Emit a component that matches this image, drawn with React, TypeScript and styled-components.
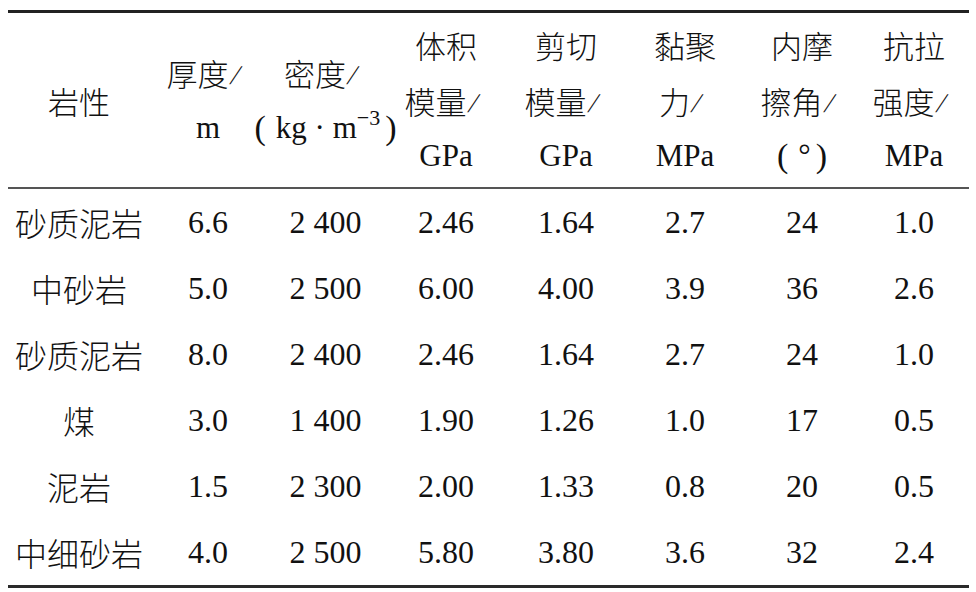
import React from "react";
import styled, { createGlobalStyle } from "styled-components";

const GlobalStyle = createGlobalStyle`
  html, body {
    margin: 0;
    padding: 0;
    background: #fff;
  }
  body {
    font-family: "Liberation Serif", "Noto Sans CJK SC", serif;
    font-weight: 300;
    color: #111;
  }
`;

const COLUMNS = "142px 116px 119px 122px 118px 120px 114px 110px";

const Page = styled.div`
  padding: 10px 0 0 8px;
`;

const Table = styled.div`
  width: 961px;
  border-top: 3px solid #222;
  border-bottom: 3px solid #2a2a2a;
`;

const HeaderRow = styled.div`
  display: grid;
  grid-template-columns: ${COLUMNS};
  height: 174px;
  border-bottom: 2px solid #555;
`;

const HeaderCell = styled.div`
  display: flex;
  flex-direction: column;
  align-items: center;
  justify-content: center;
`;

const HeaderLine = styled.div`
  height: 56px;
  display: flex;
  align-items: center;
  justify-content: center;
  font-size: 31px;
  white-space: nowrap;
`;

const Slash = styled.span`
  display: inline-block;
  width: 18px;
  font-size: 27px;
  text-align: left;
  padding-left: 3px;
  transform: translateY(3px) skewX(-18deg);
`;

const Paren = styled.span<{ $side: "l" | "r" }>`
  display: inline-block;
  font-size: 34px;
  padding: ${(p) => (p.$side === "l" ? "0 10px 0 0" : "0 0 0 5px")};
`;

const Sup = styled.span`
  display: inline-block;
  font-size: 22px;
  transform: translateY(-10px);
`;

const BodyRow = styled.div`
  display: grid;
  grid-template-columns: ${COLUMNS};
  height: 66px;
`;

const Cell = styled.div`
  display: flex;
  align-items: center;
  justify-content: center;
  font-size: 32px;
  white-space: nowrap;
`;

const Unit = ({ text }: { text: string }) => (
  <>
    {text}
    <Slash>/</Slash>
  </>
);

const rows: string[][] = [
  ["砂质泥岩", "6.6", "2 400", "2.46", "1.64", "2.7", "24", "1.0"],
  ["中砂岩", "5.0", "2 500", "6.00", "4.00", "3.9", "36", "2.6"],
  ["砂质泥岩", "8.0", "2 400", "2.46", "1.64", "2.7", "24", "1.0"],
  ["煤", "3.0", "1 400", "1.90", "1.26", "1.0", "17", "0.5"],
  ["泥岩", "1.5", "2 300", "2.00", "1.33", "0.8", "20", "0.5"],
  ["中细砂岩", "4.0", "2 500", "5.80", "3.80", "3.6", "32", "2.4"],
];

export default function App() {
  return (
    <Page>
      <GlobalStyle />
      <Table>
        <HeaderRow>
          <HeaderCell>
            <HeaderLine>岩性</HeaderLine>
          </HeaderCell>
          <HeaderCell>
            <HeaderLine>
              <Unit text="厚度" />
            </HeaderLine>
            <HeaderLine>m</HeaderLine>
          </HeaderCell>
          <HeaderCell>
            <HeaderLine>
              <Unit text="密度" />
            </HeaderLine>
            <HeaderLine>
              <Paren $side="l">(</Paren>kg&nbsp;·&nbsp;m<Sup>−3</Sup>
              <Paren $side="r">)</Paren>
            </HeaderLine>
          </HeaderCell>
          <HeaderCell>
            <HeaderLine>体积</HeaderLine>
            <HeaderLine>
              <Unit text="模量" />
            </HeaderLine>
            <HeaderLine>GPa</HeaderLine>
          </HeaderCell>
          <HeaderCell>
            <HeaderLine>剪切</HeaderLine>
            <HeaderLine>
              <Unit text="模量" />
            </HeaderLine>
            <HeaderLine>GPa</HeaderLine>
          </HeaderCell>
          <HeaderCell>
            <HeaderLine>黏聚</HeaderLine>
            <HeaderLine>
              <Unit text="力" />
            </HeaderLine>
            <HeaderLine>MPa</HeaderLine>
          </HeaderCell>
          <HeaderCell>
            <HeaderLine>内摩</HeaderLine>
            <HeaderLine>
              <Unit text="擦角" />
            </HeaderLine>
            <HeaderLine>
              <Paren $side="l">(</Paren>°<Paren $side="r">)</Paren>
            </HeaderLine>
          </HeaderCell>
          <HeaderCell>
            <HeaderLine>抗拉</HeaderLine>
            <HeaderLine>
              <Unit text="强度" />
            </HeaderLine>
            <HeaderLine>MPa</HeaderLine>
          </HeaderCell>
        </HeaderRow>
        {rows.map((r, i) => (
          <BodyRow key={i}>
            {r.map((v, j) => (
              <Cell key={j}>{v}</Cell>
            ))}
          </BodyRow>
        ))}
      </Table>
    </Page>
  );
}
